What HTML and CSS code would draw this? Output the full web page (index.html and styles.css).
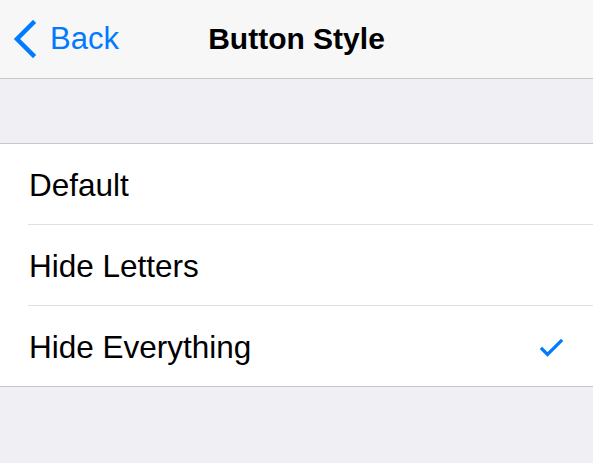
FILE: index.html
```html
<!DOCTYPE html>
<html lang="en">
<head>
    <meta charset="UTF-8">
    <meta name="viewport" content="width=device-width, initial-scale=1.0">
    <link rel="stylesheet" href="styles.css">
    <title>Button Style</title>
</head>
<body>
    <div class="navBar">
        <a class="backButton" href="#">
            <svg class="backChevron" width="24" height="38" viewBox="0 0 24 38">
                <path d="M20 3 L4 19 L20 35" fill="none" stroke="#007aff" stroke-width="4.5" stroke-linecap="square"/>
            </svg>
            <span class="backLabel">Back</span>
        </a>
        <h1 class="navTitle">Button Style</h1>
    </div>

    <div class="optionList">
        <div class="optionRow">
            <span class="optionLabel">Default</span>
        </div>
        <div class="optionRow">
            <span class="optionLabel">Hide Letters</span>
        </div>
        <div class="optionRow selected">
            <span class="optionLabel">Hide Everything</span>
            <svg class="checkMark" width="26" height="20" viewBox="0 0 26 20">
                <path d="M4 11 L9.5 16.5 L23 3" fill="none" stroke="#007aff" stroke-width="3.2" stroke-linecap="square"/>
            </svg>
        </div>
    </div>
</body>
</html>
```

FILE: styles.css
```css
body {
    margin: 0;
    padding: 0;
    background-color: #efeff4;
    font-family: "Liberation Sans", Arial, sans-serif;
    height: 463px;
    overflow: hidden;
}

.navBar {
    height: 78px;
    background-color: #f7f7f7;
    border-bottom: 1px solid #c8c7cc;
    display: flex;
    align-items: center;
    justify-content: center;
    position: relative;
}

.backButton {
    position: absolute;
    left: 13px;
    top: 0;
    height: 78px;
    display: flex;
    align-items: center;
    text-decoration: none;
    color: #007aff;
}

.backChevron {
    margin-right: 13px;
}

.backLabel {
    font-size: 31px;
}

.navTitle {
    margin: 0;
    font-size: 30px;
    font-weight: bold;
    color: #000;
}

.optionList {
    margin-top: 64px;
    background-color: #fff;
    border-top: 1px solid #c8c7cc;
    border-bottom: 1px solid #c8c7cc;
}

.optionRow {
    height: 80px;
    margin-left: 28px;
    padding-right: 29px;
    display: flex;
    align-items: center;
    justify-content: space-between;
    border-bottom: 1px solid #e0e0e3;
}

.optionRow:last-child {
    border-bottom: none;
}

.optionLabel {
    font-size: 31.5px;
    color: #000;
    padding-left: 1px;
    padding-top: 3px;
}

.checkMark {
    margin-top: 4px;
}
```
